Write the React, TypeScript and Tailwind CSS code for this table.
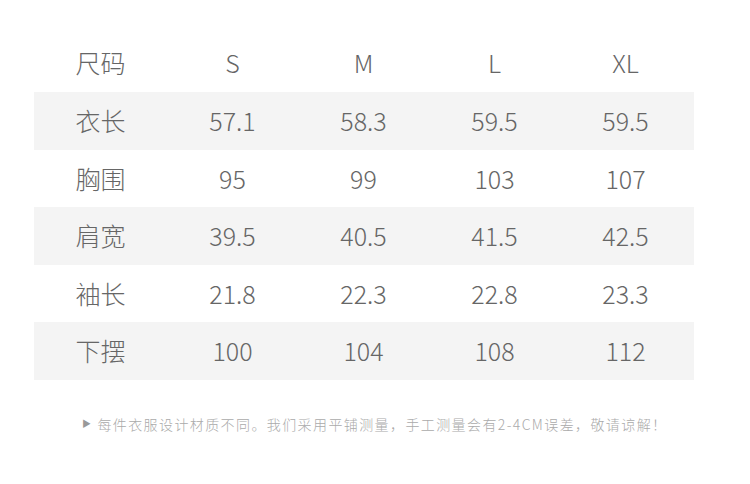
const rows: string[][] = [
  ["衣长", "57.1", "58.3", "59.5", "59.5"],
  ["胸围", "95", "99", "103", "107"],
  ["肩宽", "39.5", "40.5", "41.5", "42.5"],
  ["袖长", "21.8", "22.3", "22.8", "23.3"],
  ["下摆", "100", "104", "108", "112"],
];

const font = { fontFamily: '"Noto Sans CJK SC", "Noto Sans", sans-serif' };

export default function App() {
  return (
    <div className="w-[750px] h-[484px] bg-white pt-[34px]" style={font}>
      <div className="mx-[34px] w-[660px] text-[#666] text-[25px] font-light">
        <div className="grid grid-cols-[133px_131px_131px_131px_131px] h-[58px] items-center text-center">
          <span>尺码</span>
          <span>S</span>
          <span>M</span>
          <span>L</span>
          <span>XL</span>
        </div>
        {rows.map((row, i) => (
          <div
            key={i}
            className={`grid grid-cols-[133px_131px_131px_131px_131px] h-[57.5px] items-center text-center ${i % 2 === 0 ? "bg-[#f4f4f4]" : ""}`}
          >
            {row.map((cell, j) => (
              <span key={j}>{cell}</span>
            ))}
          </div>
        ))}
      </div>
      <div className="flex items-center mt-[34px] pl-[82px] text-[14px] tracking-[1.4px] text-[#aaa] font-light">
        <span className="text-[9px] mr-[5px] text-[#999]">▶</span>
        <span>每件衣服设计材质不同。我们采用平铺测量，手工测量会有2-4CM误差，敬请谅解！</span>
      </div>
    </div>
  );
}
